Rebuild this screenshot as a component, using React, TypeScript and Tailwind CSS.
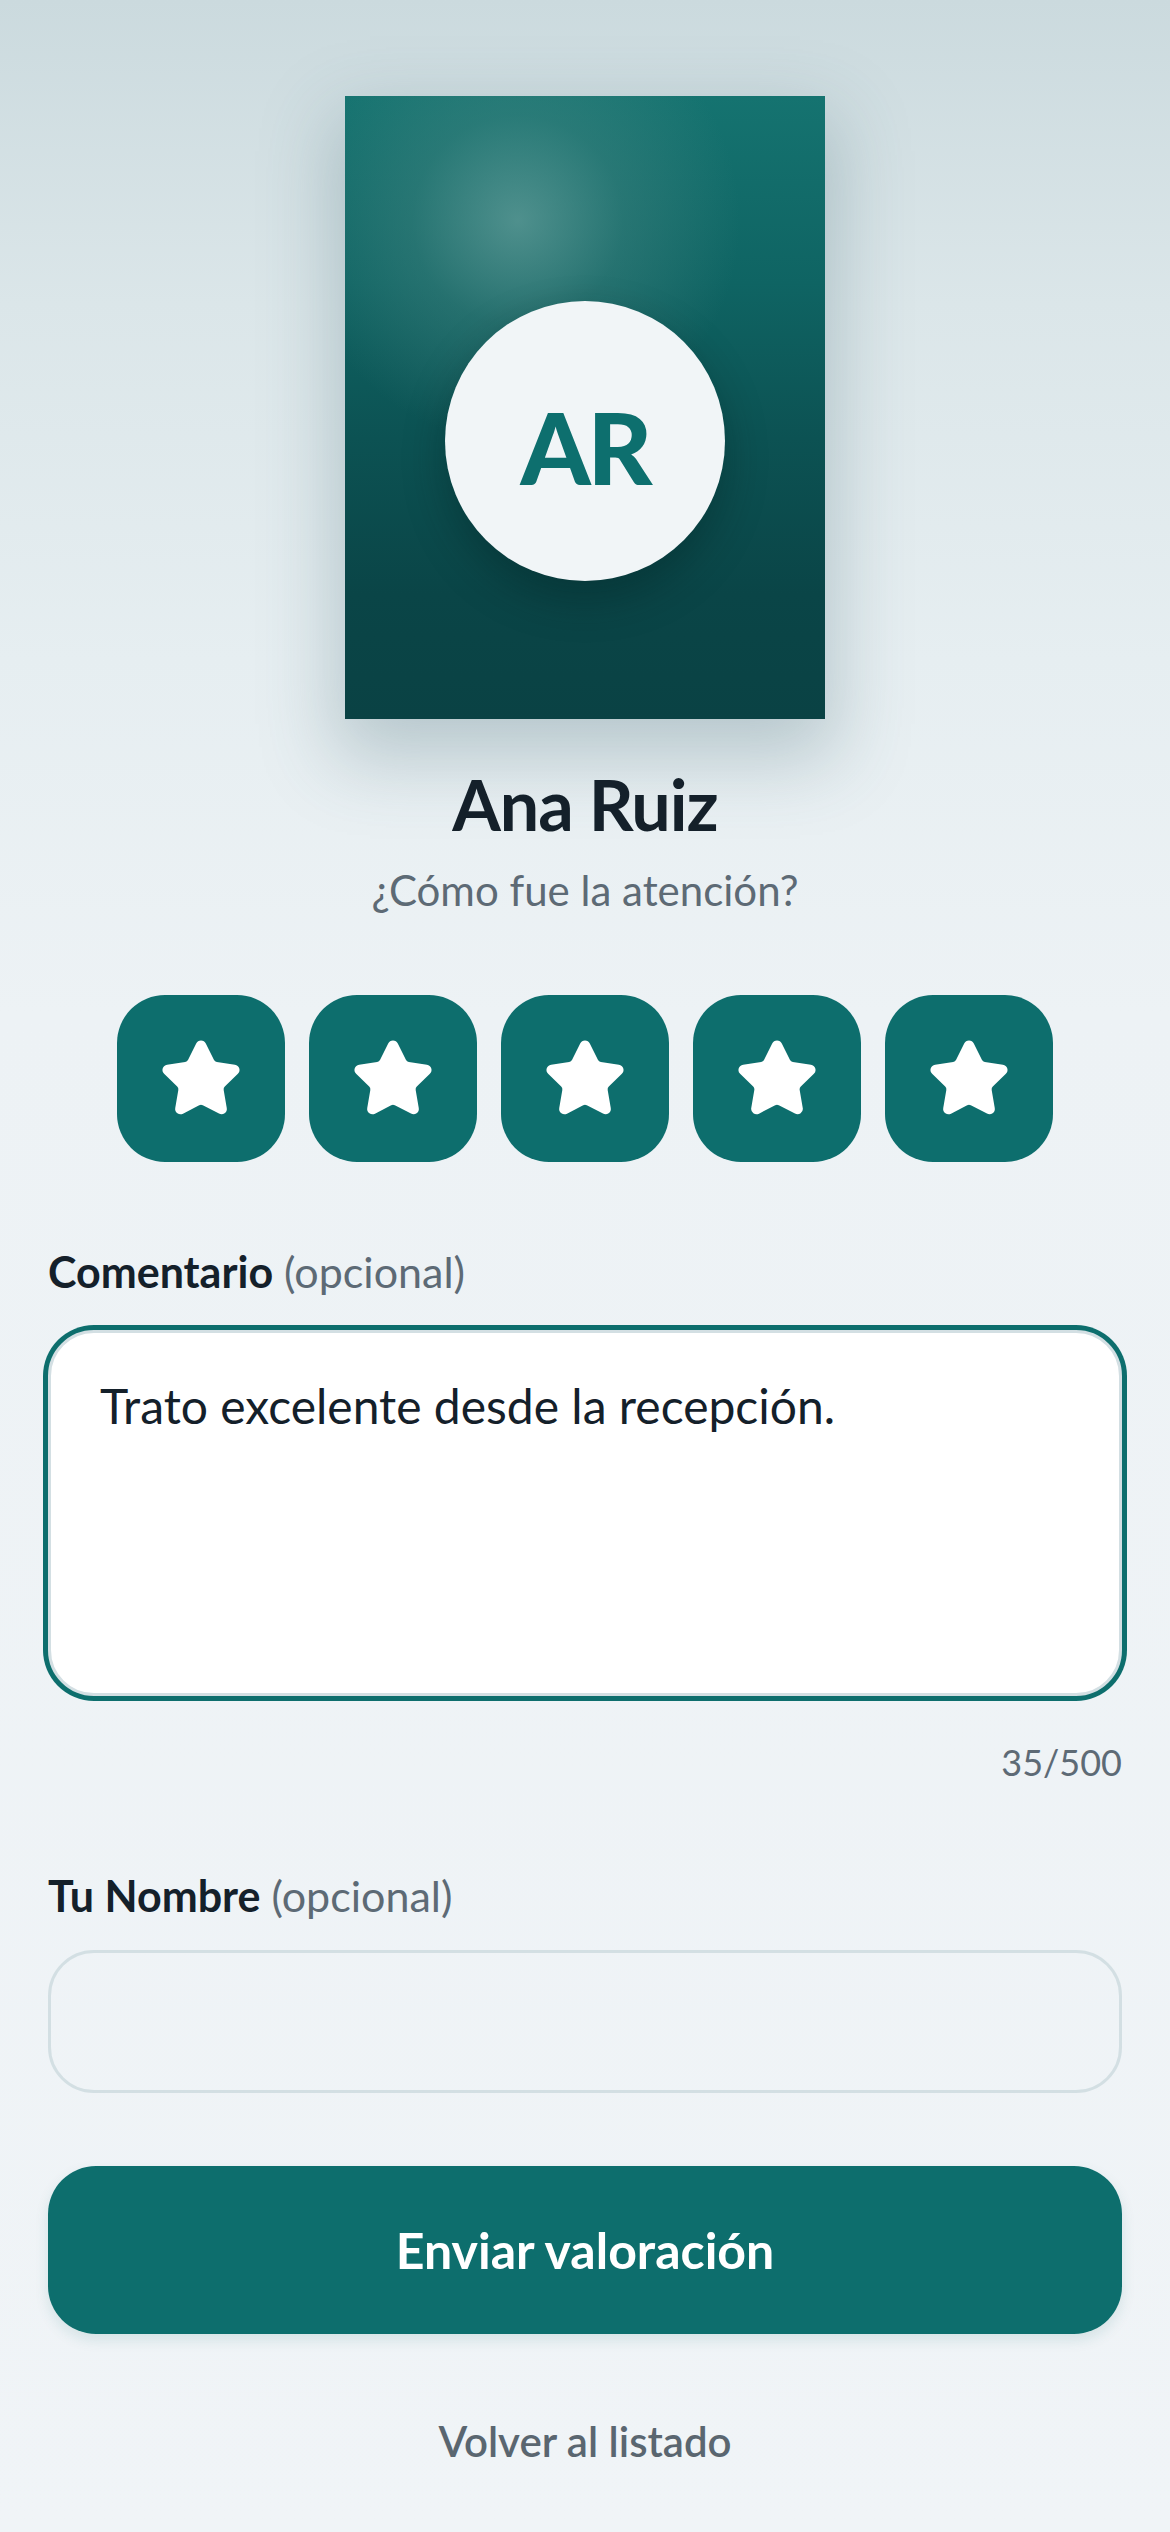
import React from "react";
import { Star } from "lucide-react";

export default function App() {
  return (
    <div className="min-h-[2532px] w-full bg-[linear-gradient(180deg,#cbdade_0%,#dbe6e9_12%,#e6eef1_26%,#edf2f5_40%,#f0f4f7_100%)] font-['Lato',sans-serif] text-[#14202a]">
      <div className="flex flex-col items-center pt-[96px]">
        <div className="flex h-[623px] w-[480px] flex-col items-center bg-[radial-gradient(circle_at_36%_20%,rgba(120,170,166,0.6)_0%,rgba(80,140,136,0.35)_18%,rgba(20,110,106,0)_38%),linear-gradient(180deg,#157370_0%,#0f6463_30%,#0c5253_55%,#0a4547_80%,#0a4244_100%)] pt-[205px] shadow-[0_30px_70px_10px_rgba(60,100,112,0.28)]">
          <div className="flex h-[280px] w-[280px] items-center justify-center rounded-full bg-[#f1f5f7] shadow-[0_18px_40px_rgba(0,30,30,0.35)]">
            <span className="pt-[10px] text-[100px] font-black leading-none tracking-[-3px] text-[#0d6f6e]">AR</span>
          </div>
        </div>
        <h1 className="mt-[50px] text-[70px] font-bold leading-none tracking-[-1px] text-[#14202a]">Ana Ruiz</h1>
        <p className="mt-[30px] text-[42px] leading-none text-[#5d6a75]">¿Cómo fue la atención?</p>
        <div className="mt-[84px] flex gap-[24px]">
          {[0, 1, 2, 3, 4].map((i) => (
            <button
              key={i}
              className="flex h-[167px] w-[168px] items-center justify-center rounded-[48px] bg-[#0d6e6d]"
            >
              <Star size={84} fill="#ffffff" color="#ffffff" strokeWidth={2} />
            </button>
          ))}
        </div>
      </div>

      <div className="px-[48px]">
        <div className="mt-[88px] text-[43px] leading-none">
          <span className="font-bold text-[#14202a]">Comentario</span>
          <span className="text-[#5d6a75]"> (opcional)</span>
        </div>
        <textarea
          readOnly
          value="Trato excelente desde la recepción."
          className="mt-[37px] block h-[366px] w-full resize-none rounded-[46px] border-[3px] border-[#d3dfe3] bg-white px-[49px] pt-[42px] text-[48px] leading-[1.3] text-[#14202a] shadow-[0_0_0_5px_#0d6e6d] outline-none"
        />
        <div className="mt-[48px] text-right text-[36px] leading-none text-[#5d6a75]">35/500</div>
        <div className="mt-[94px] text-[43px] leading-none">
          <span className="font-bold text-[#14202a]">Tu Nombre</span>
          <span className="text-[#5d6a75]"> (opcional)</span>
        </div>
        <input
          readOnly
          className="mt-[33px] block h-[143px] w-full rounded-[46px] border-[3px] border-[#d3dfe3] bg-transparent px-[48px] text-[45px] outline-none"
        />
        <button className="mt-[73px] flex h-[168px] w-full items-center justify-center rounded-[48px] bg-[#0d6e6d] text-[50px] font-bold leading-none text-white shadow-[0_6px_14px_rgba(13,110,109,0.12)]">
          Enviar valoración
        </button>
        <div className="mt-[86px] text-center text-[42px] font-semibold leading-none text-[#5a6670]">Volver al listado</div>
      </div>
    </div>
  );
}
